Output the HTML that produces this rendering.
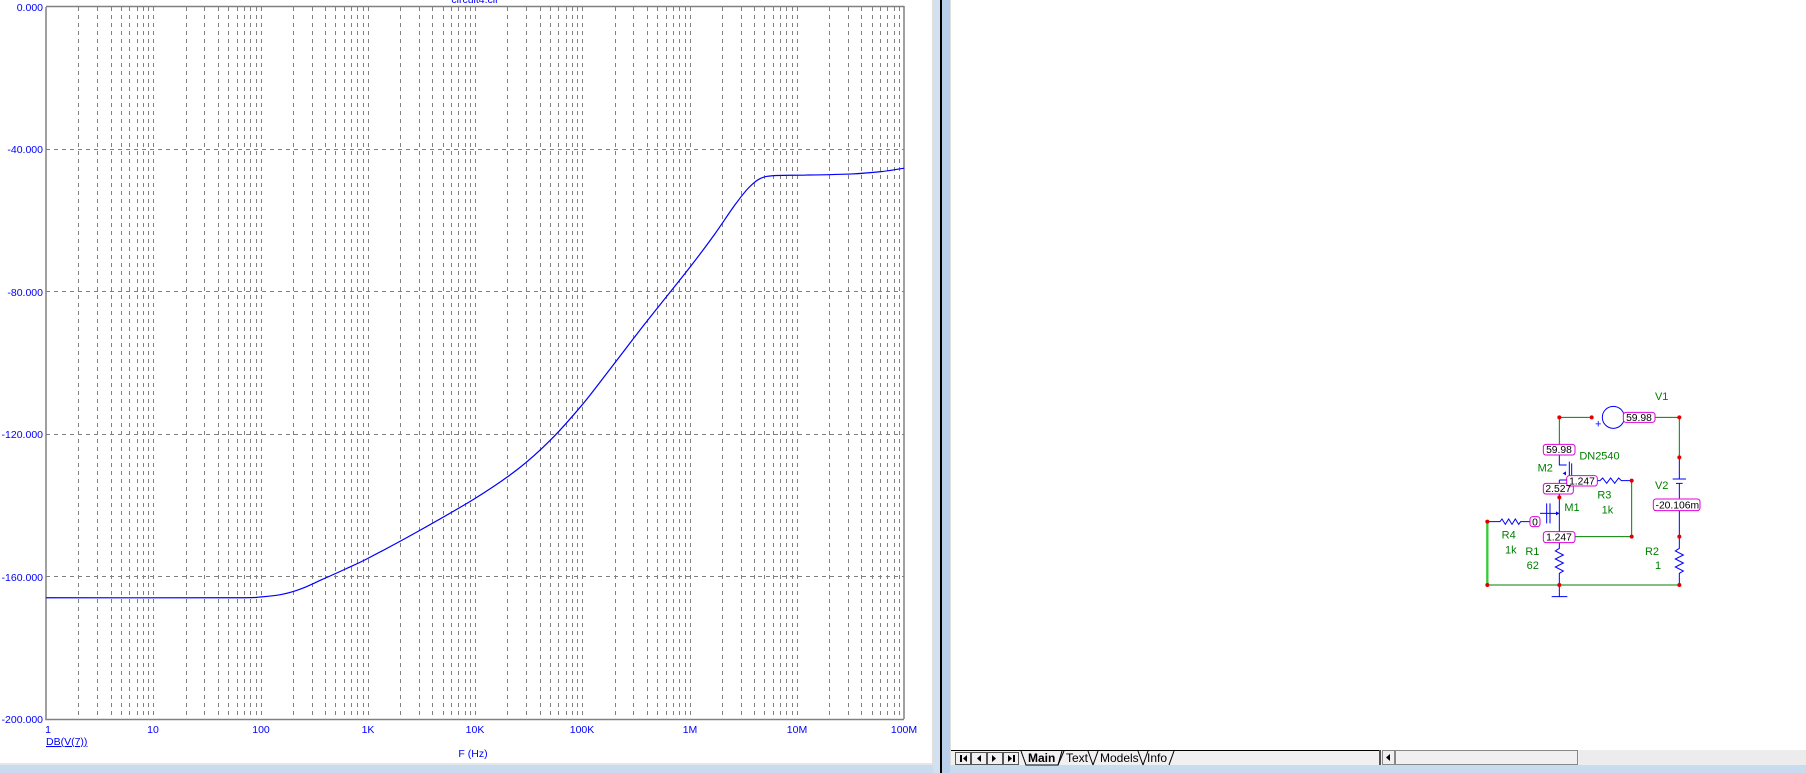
<!DOCTYPE html>
<html><head><meta charset="utf-8"><style>
html,body{margin:0;padding:0;width:1806px;height:773px;overflow:hidden;background:#fff}
svg{display:block}
text{font-family:"Liberation Sans",sans-serif}
</style></head><body>
<svg width="1806" height="773" viewBox="0 0 1806 773" xmlns="http://www.w3.org/2000/svg">
<rect x="0" y="0" width="1806" height="773" fill="#fff"/>
<rect x="0" y="765" width="1806" height="8" fill="#c9dbee"/>
<rect x="0" y="763" width="933" height="2" fill="#e6e6e6"/>
<rect x="932" y="0" width="1" height="765" fill="#e0e0e0"/>
<rect x="933" y="0" width="7" height="773" fill="#d3e0ef"/>
<rect x="940" y="0" width="2" height="773" fill="#000"/>
<rect x="942" y="0" width="8" height="773" fill="#b9d1ea"/>
<rect x="950" y="0" width="1" height="765" fill="#dcdcdc"/>

<g stroke="#808080" stroke-width="1" stroke-dasharray="4,4" fill="none">
<line x1="46" y1="149.5" x2="904" y2="149.5"/>
<line x1="46" y1="291.5" x2="904" y2="291.5"/>
<line x1="46" y1="434.5" x2="904" y2="434.5"/>
<line x1="46" y1="576.5" x2="904" y2="576.5"/>
</g>
<g id="vg" stroke="#808080" stroke-width="1" stroke-dasharray="4,4"></g>
<polyline points="46,7 46,719.5 904,719.5" fill="none" stroke="#808080" stroke-width="1.5"/>
<line x1="46" y1="6.5" x2="904" y2="6.5" stroke="#808080" stroke-width="1.5"/>
<line x1="904" y1="6" x2="904" y2="719" stroke="#808080" stroke-width="1.5"/>

<g transform="scale(1.1518)"><path id="cv" fill="none" stroke="#0000ff" stroke-width="1.05" d=""/></g>

<g fill="#0000ff" font-size="10.5" text-anchor="end">
<text x="43" y="11">0.000</text>
<text x="43" y="153">-40.000</text>
<text x="43" y="296">-80.000</text>
<text x="43" y="438">-120.000</text>
<text x="43" y="581">-160.000</text>
<text x="43" y="723">-200.000</text>
</g>
<g fill="#0000ff" font-size="10.5" text-anchor="middle">
<text x="48" y="733">1</text>
<text x="153" y="733">10</text>
<text x="261" y="733">100</text>
<text x="368" y="733">1K</text>
<text x="475" y="733">10K</text>
<text x="582" y="733">100K</text>
<text x="690" y="733">1M</text>
<text x="797" y="733">10M</text>
<text x="904" y="733">100M</text>
<text x="473" y="757">F (Hz)</text>
<text x="475" y="3">circuit4.cir</text>
</g>
<text x="46" y="745" fill="#0000ff" font-size="10.5" text-decoration="underline">DB(V(7))</text>

<!-- tab bar -->
<rect x="951" y="750" width="855" height="15" fill="#f0f0f0"/>
<line x1="951" y1="750.5" x2="1380" y2="750.5" stroke="#000"/>
<g fill="#f0f0f0" stroke="#555">
<rect x="955.5" y="752.5" width="15" height="12"/>
<rect x="971.5" y="752.5" width="15" height="12"/>
<rect x="987.5" y="752.5" width="15" height="12"/>
<rect x="1003.5" y="752.5" width="15" height="12"/>
</g>
<g fill="#000">
<rect x="960" y="755" width="2" height="7"/><polygon points="967,755 963,758.5 967,762"/>
<polygon points="981,755 977,758.5 981,762"/>
<polygon points="992,755 996,758.5 992,762"/>
<polygon points="1008,755 1012,758.5 1008,762"/><rect x="1013" y="755" width="2" height="7"/>
</g>
<g stroke="#000" fill="none" stroke-width="1">
<path d="M1021,751 L1026,765 L1058,765 L1062,751"/>
<path d="M1058,765 L1064,751"/><path d="M1088,751 L1093,765"/>
<path d="M1093,765 L1098,751"/><path d="M1138,751 L1143,765"/>
<path d="M1143,765 L1148,751"/><path d="M1174,751 L1169,765"/>
</g>
<g font-size="12" fill="#000">
<text x="1028" y="762" font-weight="bold">Main</text>
<text x="1066" y="762">Text</text>
<text x="1100" y="762">Models</text>
<text x="1147" y="762">Info</text>
</g>
<rect x="1379" y="750" width="2" height="15" fill="#555"/>
<rect x="1382.5" y="750.5" width="12" height="14" fill="#f0f0f0" stroke="#888"/>
<polygon points="1390,754 1386,757.5 1390,761" fill="#000"/>
<rect x="1395.5" y="750.5" width="182" height="14" fill="#f0f0f0" stroke="#888"/>
<rect x="1579" y="750" width="227" height="15" fill="#ececec"/>

<!-- schematic -->
<g transform="translate(1480,380) scale(0.33333)">
<g fill="none" stroke-width="3">
<path d="M238,112 H330 M470,112 H598 V232" stroke="#008000"/>
<circle cx="400" cy="112" r="33" stroke="#0000ff"/>
<path d="M598,232 V297 M578,297 H618 M588,310 H608 M598,310 V355 M598,392 V470 M598,470 V505 l-12,8 24,12 -24,12 24,12 -24,12 24,12 -12,7 V615" stroke="#0000ff"/>
<path d="M22,615 H598" stroke="#008000"/>
<path d="M22,425 V615" stroke="#33cc33" stroke-width="7"/>
<path d="M238,112 V193 M285,470 H455 V302" stroke="#008000"/>
<path d="M238,225 V255 H260 M268,245 V300 M275,250 V300 M238,300 H262 M238,300 V310 M238,342 V400 H200 M200,370 V430 M210,370 V430 M238,370 V430 M210,400 H238 M238,430 V455 M238,488 V505 l-12,8 24,12 -24,12 24,12 -24,12 24,12 -12,7 V615 M238,615 V650 M215,650 H262" stroke="#0000ff"/>
<path d="M352,302 H360 l8,-8 12,16 12,-16 12,16 12,-16 8,8 H455" stroke="#0000ff"/>
<path d="M22,425 H60 l6,-8 10,16 10,-16 10,16 10,-16 10,16 6,-8 H150" stroke="#0000ff"/>
<path d="M200,400 H180" stroke="#0000ff"/>
</g>
<polygon points="238,400 228,394 228,406" fill="#0000ff"/>
<polygon points="248,280 258,274 258,286" fill="#0000ff"/>
<g fill="#fff" stroke="#e000e0" stroke-width="3">
<rect x="430" y="97" width="95" height="30" rx="8"/>
<rect x="520" y="357" width="140" height="35" rx="8"/>
<rect x="190" y="193" width="95" height="32" rx="8"/>
<rect x="190" y="310" width="90" height="32" rx="8"/>
<rect x="260" y="287" width="92" height="31" rx="8"/>
<rect x="190" y="455" width="95" height="33" rx="8"/>
<rect x="150" y="410" width="30" height="30" rx="8"/>
</g>
<g font-size="31" fill="#000" text-anchor="middle">
<text x="477" y="123">59.98</text>
<text x="592" y="385">-20.106m</text>
<text x="237" y="219">59.98</text>
<text x="235" y="336">2.527</text>
<text x="306" y="313">1.247</text>
<text x="237" y="482">1.247</text>
<text x="165" y="436">0</text>
</g>
<g font-size="33" fill="#008000">
<text x="525" y="60">V1</text>
<text x="298" y="238">DN2540</text>
<text x="173" y="275">M2</text>
<text x="352" y="355">R3</text>
<text x="365" y="400">1k</text>
<text x="253" y="393">M1</text>
<text x="65" y="475">R4</text>
<text x="75" y="520">1k</text>
<text x="136" y="525">R1</text>
<text x="140" y="567">62</text>
<text x="525" y="327">V2</text>
<text x="495" y="525">R2</text>
<text x="525" y="567">1</text>
<text x="345" y="142" fill="#0000ff">+</text>
</g>
<g fill="#e00000">
<circle cx="238" cy="112" r="6"/><circle cx="335" cy="112" r="6"/><circle cx="598" cy="112" r="6"/>
<circle cx="598" cy="232" r="6"/><circle cx="455" cy="302" r="6"/><circle cx="238" cy="352" r="6"/>
<circle cx="22" cy="425" r="6"/><circle cx="455" cy="470" r="6"/><circle cx="598" cy="470" r="6"/>
<circle cx="22" cy="615" r="6"/><circle cx="238" cy="615" r="6"/><circle cx="598" cy="615" r="6"/>
</g>
</g>
</svg>
<script>
(function(){var g=document.getElementById('vg');var s='';
for(var d=0;d<8;d++){for(var k=2;k<=10;k++){if(d==7&&k==10)continue;var x=46+107.25*(d+Math.log10(k));x=Math.round(x)+0.5;
s+='<line x1="'+x+'" y1="7" x2="'+x+'" y2="719"/>';}}
g.innerHTML=s;
var P=[[40,519],[200,519],[226,518.3],[245,516],[262,511],[280,503],[300,494],[319,485],[360,463],[412,433],[450,407],[478,382],[505,352],[530,320],[560,281],[599,232],[620,204],[638,178],[650,163],[660,155],[672,152.5],[700,152],[740,151],[765,149],[785,146]];
var d='M'+P[0][0]+','+P[0][1];
for(var i=0;i<P.length-1;i++){var p0=P[Math.max(i-1,0)],p1=P[i],p2=P[i+1],p3=P[Math.min(i+2,P.length-1)];
var c1=[p1[0]+(p2[0]-p0[0])/6,p1[1]+(p2[1]-p0[1])/6],c2=[p2[0]-(p3[0]-p1[0])/6,p2[1]-(p3[1]-p1[1])/6];
d+=' C'+c1[0].toFixed(1)+','+c1[1].toFixed(1)+' '+c2[0].toFixed(1)+','+c2[1].toFixed(1)+' '+p2[0]+','+p2[1];}
document.getElementById('cv').setAttribute('d',d);})();
</script>
</body></html>
